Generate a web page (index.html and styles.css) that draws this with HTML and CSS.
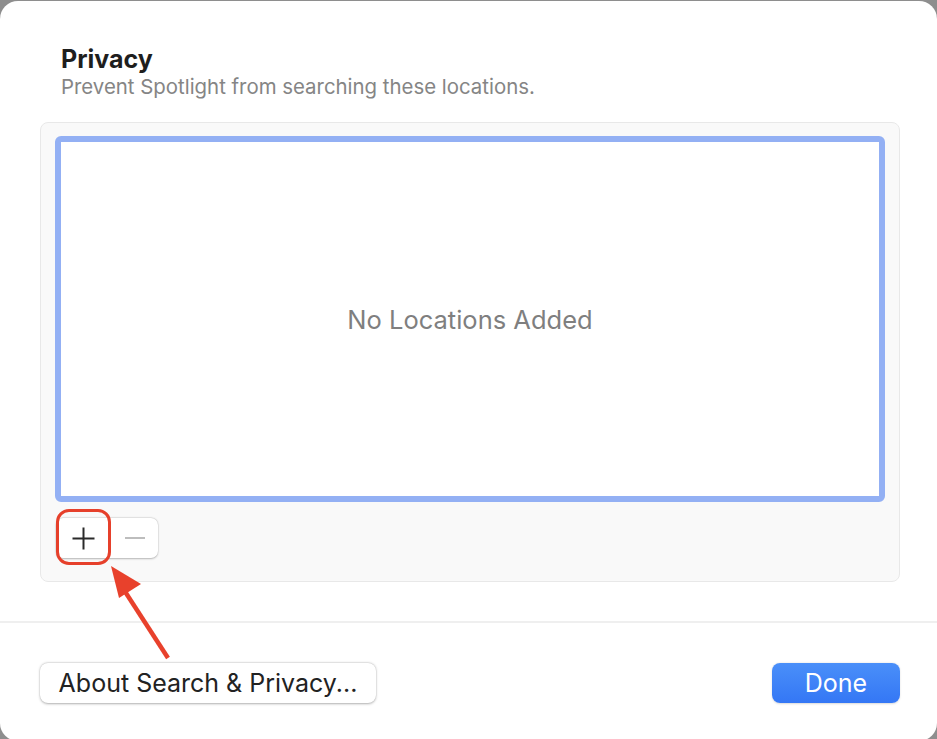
FILE: index.html
```html
<!DOCTYPE html>
<html lang="en">
<head>
    <meta charset="UTF-8">
    <meta name="viewport" content="width=device-width, initial-scale=1.0">
    <title>Spotlight Privacy</title>
    <link rel="stylesheet" href="styles.css">
</head>
<body>
    <div class="window">
        <div class="content">
            <div class="header">
                <div class="title">Privacy</div>
                <div class="subtitle">Prevent Spotlight from searching these locations.</div>
            </div>
            <div class="box">
                <div class="list">
                    <span class="empty">No Locations Added</span>
                </div>
                <div class="controls">
                    <div class="segmented">
                        <button type="button" class="seg-btn add">
                            <svg width="23" height="23" viewBox="0 0 23 23"><path d="M11.5 0.5v22M0.5 11.5h22" stroke="#2a2a2a" stroke-width="2" fill="none"/></svg>
                        </button>
                        <button type="button" class="seg-btn remove">
                            <svg width="22" height="22" viewBox="0 0 22 22"><path d="M1 11h20" stroke="#bdbdbd" stroke-width="2" fill="none"/></svg>
                        </button>
                    </div>
                    <div class="highlight"></div>
                    <svg class="arrow" width="90" height="110" viewBox="0 0 90 110">
                        <path d="M68 98 L24 30" stroke="#e8412c" stroke-width="4.5" stroke-linecap="butt" fill="none"/>
                        <polygon points="11,6 41,24 19,38" fill="#e8412c"/>
                    </svg>
                </div>
            </div>
        </div>
        <div class="separator"></div>
        <div class="footer">
            <button type="button" class="btn about-btn">About Search &amp; Privacy...</button>
            <button type="button" class="btn done-btn">Done</button>
        </div>
    </div>
</body>
</html>
```

FILE: styles.css
```css
body {
    margin: 0;
    background-color: #8e8e8e;
    font-family: Inter, "Noto Sans", sans-serif;
}

.window {
    width: 937px;
    height: 740px;
    margin-top: 1px;
    background-color: white;
    border-radius: 18px;
    overflow: hidden;
}

.content {
    padding: 43px 37px 0 40px;
}

.header {
    padding-left: 21px;
}

.title {
    font-size: 25px;
    font-weight: 650;
    color: #1e1e1e;
    line-height: 30px;
}

.subtitle {
    margin-top: 1px;
    font-size: 20.4px;
    color: #858585;
    line-height: 24px;
}

.box {
    margin-top: 23px;
    height: 432px;
    padding: 13px 14px;
    background-color: #f9f9f9;
    border: 1px solid #e8e8e8;
    border-radius: 8px;
}

.list {
    height: 354px;
    display: flex;
    align-items: center;
    justify-content: center;
    background-color: white;
    border: 6px solid #93b0f4;
    border-radius: 6px;
}

.empty {
    font-size: 25.5px;
    color: #7f7f7f;
}

.controls {
    position: relative;
    margin-top: 16px;
    height: 40px;
}

.segmented {
    display: flex;
    width: 102px;
    height: 40px;
    margin-left: 1px;
    background-color: white;
    border-radius: 7px;
    box-shadow: 0 0.5px 2px rgba(0, 0, 0, 0.25), 0 0 0 0.5px rgba(0, 0, 0, 0.06);
}

.seg-btn {
    display: flex;
    align-items: center;
    justify-content: center;
    padding: 0;
    border: none;
    background: none;
}

.add {
    width: 55px;
}

.remove {
    flex: 1;
}

.highlight {
    position: absolute;
    left: 1px;
    top: -9px;
    box-sizing: border-box;
    width: 55px;
    height: 56px;
    border: 3.5px solid #e6402b;
    border-radius: 13px;
}

.arrow {
    position: absolute;
    left: 45px;
    top: 42px;
}

.separator {
    margin-top: 39px;
    height: 2px;
    background-color: #efefef;
}

.footer {
    display: flex;
    justify-content: space-between;
    padding: 40px 37px 0 40px;
}

.btn {
    height: 40px;
    border: none;
    border-radius: 8px;
    font-family: Inter, "Noto Sans", sans-serif;
    font-size: 25px;
    cursor: pointer;
}

.about-btn {
    width: 336px;
    background-color: white;
    color: #222;
    box-shadow: 0 0.5px 2.5px rgba(0, 0, 0, 0.3), 0 0 0 0.5px rgba(0, 0, 0, 0.05);
}

.done-btn {
    width: 128px;
    color: white;
    background: linear-gradient(#4a8ff9, #3477f5);
    box-shadow: 0 0.5px 2px rgba(0, 0, 0, 0.15);
}
```
